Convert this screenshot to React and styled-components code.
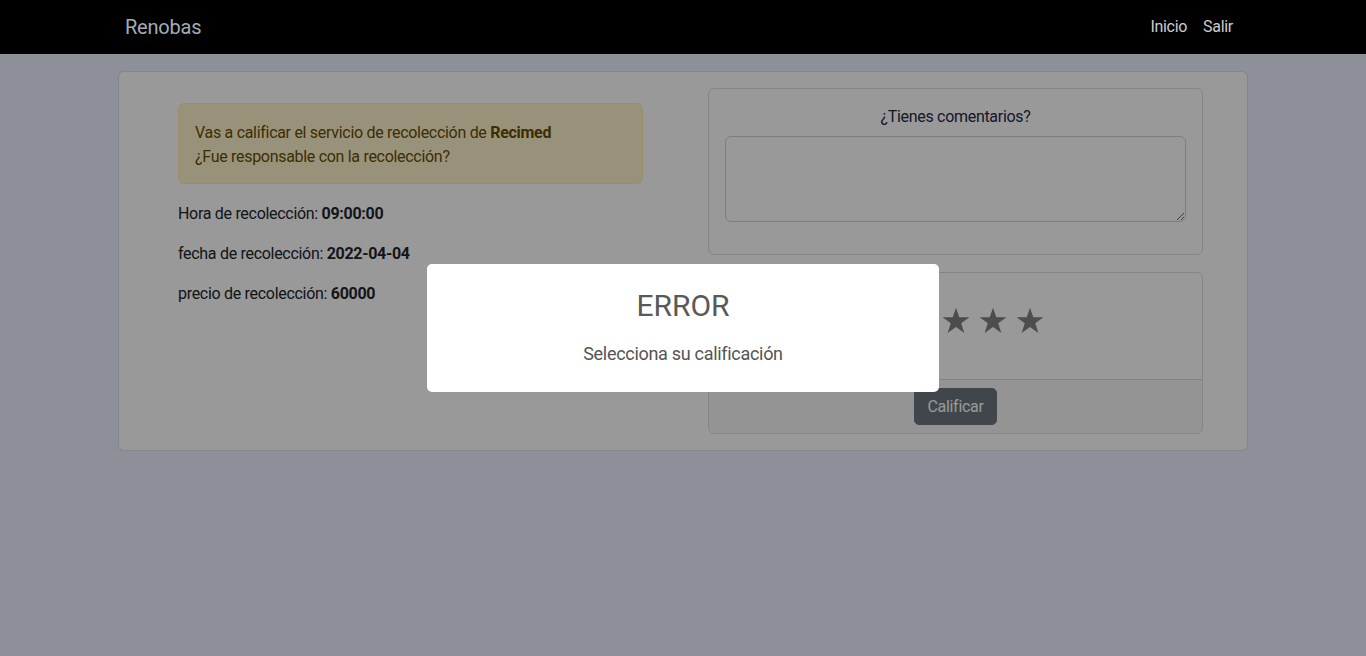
import React from "react";
import styled, { createGlobalStyle } from "styled-components";

const Global = createGlobalStyle`
  html, body { margin: 0; padding: 0; }
  body {
    background: #ebf0ff;
    font-family: Roboto, "Noto Sans", sans-serif;
    font-size: 16px;
    line-height: 24px;
    color: #212529;
    min-height: 656px;
  }
  * { box-sizing: border-box; }
`;

const Navbar = styled.nav`
  position: relative;
  z-index: 1070;
  height: 54px;
  background: #000;
  display: flex;
  align-items: center;
  justify-content: space-between;
  padding: 0 125px;
`;

const Brand = styled.span`
  font-size: 20px;
  color: #a3acb5;
  line-height: 30px;
  letter-spacing: -0.2px;
`;

const NavLinks = styled.div`
  display: flex;
`;

const NavLink = styled.span`
  color: #cdcdcd;
  padding: 8px;
  font-size: 16px;
  letter-spacing: -0.3px;
`;

const Main = styled.main`
  padding: 17px 118px 0;
`;

const Card = styled.div`
  background: #fff;
  border: 1px solid rgba(0, 0, 0, 0.125);
  border-radius: 6px;
`;

const CardBody = styled.div`
  padding: 16px;
  display: flex;
  gap: 65px;
  letter-spacing: -0.3px;
`;

const LeftCol = styled.div`
  width: 465px;
  margin-left: 43px;
  padding-top: 15px;
`;

const Alert = styled.div`
  background: #fff3cd;
  border: 1px solid #ffecb5;
  color: #664d03;
  border-radius: 6px;
  padding: 17px 16px 14px;
  margin-bottom: 16px;
`;

const Info = styled.p`
  margin: 0 0 16px;
  padding-top: 2px;
  height: 24px;
`;

const RightCol = styled.div`
  width: 495px;
  display: flex;
  flex-direction: column;
  gap: 17px;
`;

const Panel = styled.div`
  border: 1px solid rgba(0, 0, 0, 0.125);
  border-radius: 6px;
  overflow: hidden;
`;

const PanelBody = styled.div`
  padding: 16px;
  text-align: center;
`;

const Label = styled.div`
  color: #1f2a44;
  margin-bottom: 7px;
`;

const TextArea = styled.textarea`
  display: block;
  width: 100%;
  height: 86px;
  border: 1px solid #ced4da;
  border-radius: 6px;
  margin-bottom: 16px;
  font-family: inherit;
  resize: vertical;
`;

const Stars = styled.div`
  display: flex;
  justify-content: center;
  gap: 9px;
  padding: 34px 0 45px;
`;

const Footer = styled.div`
  background: rgba(0, 0, 0, 0.03);
  border-top: 1px solid rgba(0, 0, 0, 0.125);
  padding: 8px 16px;
  display: flex;
  justify-content: center;
`;

const Button = styled.button`
  background: #6c757d;
  color: #fff;
  border: 1px solid #6c757d;
  border-radius: 5px;
  font-family: inherit;
  font-size: 16px;
  line-height: 24px;
  letter-spacing: -0.3px;
  padding: 6px 12px;
  height: 37px;
`;

const Overlay = styled.div`
  position: fixed;
  inset: 0;
  background: rgba(0, 0, 0, 0.4);
  z-index: 1060;
  display: flex;
  align-items: center;
  justify-content: center;
`;

const Modal = styled.div`
  width: 512px;
  background: #fff;
  border-radius: 5px;
  padding: 24px 0 20px;
  text-align: center;
  margin-top: -1px;
`;

const Title = styled.h2`
  margin: 0;
  font-size: 30px;
  line-height: 36px;
  font-weight: 400;
  color: #595959;
`;

const Message = styled.div`
  margin: 16px 26px 5px;
  font-size: 18px;
  line-height: 27px;
  color: #545454;
  letter-spacing: -0.3px;
`;

const Star = () => (
  <svg width="28" height="27" viewBox="0 0 24 23">
    <path
      d="M12 0.5l2.82 8.3h8.68l-7.02 5.1 2.68 8.3L12 17.1l-7.16 5.1 2.68-8.3L0.5 8.8h8.68z"
      fill="#808080"
    />
  </svg>
);

export default function App() {
  return (
    <>
      <Global />
      <Navbar>
        <Brand>Renobas</Brand>
        <NavLinks>
          <NavLink>Inicio</NavLink>
          <NavLink>Salir</NavLink>
        </NavLinks>
      </Navbar>
      <Main>
        <Card>
          <CardBody>
            <LeftCol>
              <Alert>
                Vas a calificar el servicio de recolección de <b>Recimed</b>
                <br />
                ¿Fue responsable con la recolección?
              </Alert>
              <Info>
                Hora de recolección: <b>09:00:00</b>
              </Info>
              <Info>
                fecha de recolección: <b>2022-04-04</b>
              </Info>
              <Info>
                precio de recolección: <b>60000</b>
              </Info>
            </LeftCol>
            <RightCol>
              <Panel>
                <PanelBody>
                  <Label>¿Tienes comentarios?</Label>
                  <TextArea />
                </PanelBody>
              </Panel>
              <Panel>
                <Stars>
                  {[0, 1, 2, 3, 4].map((i) => (
                    <Star key={i} />
                  ))}
                </Stars>
                <Footer>
                  <Button>Calificar</Button>
                </Footer>
              </Panel>
            </RightCol>
          </CardBody>
        </Card>
      </Main>
      <Overlay>
        <Modal>
          <Title>ERROR</Title>
          <Message>Selecciona su calificación</Message>
        </Modal>
      </Overlay>
    </>
  );
}
